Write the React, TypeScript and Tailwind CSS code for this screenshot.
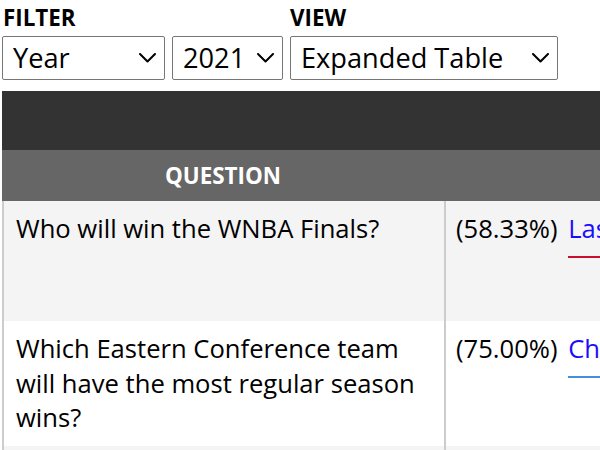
type Row = {
  question: string;
  pct: string;
  team: string;
  teamColor: string;
  shaded: boolean;
  height: string;
};

const rows: Row[] = [
  {
    question: 'Who will win the WNBA Finals?',
    pct: '(58.33%)',
    team: 'Las Vegas Aces',
    teamColor: 'border-[#c8102e]',
    shaded: true,
    height: 'h-[120px]'
  },
  {
    question: 'Which Eastern Conference team will have the most regular season wins?',
    pct: '(75.00%)',
    team: 'Chicago Sky',
    teamColor: 'border-[#418fde]',
    shaded: false,
    height: 'h-[125px]'
  },
  {
    question: 'Which Western Conference team will have the most regular season wins?',
    pct: '(66.67%)',
    team: 'Las Vegas Aces',
    teamColor: 'border-[#c8102e]',
    shaded: true,
    height: 'h-[125px]'
  }
];

// fake select box with a chevron, like the site's dropdowns
const Dropdown = ({ value, width }: { value: string; width: string }) => (
  <div
    className={`flex items-center justify-between h-[44px] pl-[10px] pr-[8px] border border-[#767676] rounded-[2px] bg-white ${width}`}
  >
    <span className="text-[27.2px] leading-none text-black">{value}</span>
    <svg width="17" height="10" viewBox="0 0 17 10" fill="none">
      <polyline
        points="1,1 8.5,8.5 16,1"
        stroke="black"
        strokeWidth="2"
        strokeLinecap="round"
        strokeLinejoin="round"
      />
    </svg>
  </div>
);

const App = () => {
  return (
    <div
      className="w-[600px] h-[450px] overflow-hidden bg-white text-black"
      style={{ fontFamily: '"Open Sans", "Noto Sans", sans-serif' }}
    >
      <div className="flex gap-[7px] pl-[2px] pt-[3px]">
        <div className="flex flex-col">
          <div className="text-[22.4px] font-bold leading-[30px] pl-[1px]">FILTER</div>
          <div className="flex gap-[7px] mt-[3px]">
            <Dropdown value="Year" width="w-[163px]" />
            <Dropdown value="2021" width="w-[111px]" />
          </div>
        </div>
        <div className="flex flex-col">
          <div className="text-[22.4px] font-bold leading-[30px]">VIEW</div>
          <div className="mt-[3px]">
            <Dropdown value="Expanded Table" width="w-[268px]" />
          </div>
        </div>
      </div>

      <div className="mt-[11px] ml-[2px] w-[900px]">
        <div className="h-[59px] bg-[#333333]" />
        <div className="flex h-[51px] bg-[#666666] text-white">
          <div className="w-[442px] flex items-center justify-center text-[22.4px] font-bold">
            QUESTION
          </div>
          <div className="flex-1" />
        </div>
        {rows.map((row) => (
          <div
            key={row.question}
            className={`flex border-l-2 border-[#cccccc] ${row.height} ${
              row.shaded ? 'bg-[#f4f4f4]' : 'bg-white'
            }`}
          >
            <div className="w-[440px] shrink-0 pl-[12px] pr-[20px] pt-[11px] text-[25.6px] leading-[34.5px]">
              {row.question}
            </div>
            <div className="w-[2px] bg-[#cccccc]" />
            <div className="flex-1 pl-[10px] pt-[11px] text-[25.6px] leading-[34.5px] whitespace-nowrap">
              {row.pct}{' '}
              <a
                href="#"
                className={`ml-[4px] text-[#1a0dff] no-underline border-b-2 pb-[10px] ${row.teamColor}`}
              >
                {row.team}
              </a>
            </div>
          </div>
        ))}
      </div>
    </div>
  );
};

export default App;
